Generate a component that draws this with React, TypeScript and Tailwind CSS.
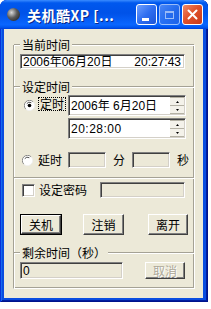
import React from "react";

const etch = "h-[2px] border-t border-t-[#a5a295] bg-white";
const sunken =
  "border border-t-[#808080] border-l-[#808080] border-b-white border-r-white shadow-[inset_1px_1px_0_#404040,inset_-1px_-1px_0_#d4d0c8]";
const raised =
  "border border-t-white border-l-white border-b-[#404040] border-r-[#404040] shadow-[inset_-1px_-1px_0_#808080] bg-[#ece9d8]";
const num = "font-['Liberation_Sans','Noto_Sans_CJK_SC',sans-serif]";

function Legend({ text }: { text: string }) {
  return (
    <div className="flex items-center h-[15px]">
      <div className={`w-[6px] ${etch}`} />
      <span className="px-[2px] text-[12px] leading-[15px]">{text}</span>
      <div className={`flex-1 ${etch}`} />
    </div>
  );
}

function Radio({ checked }: { checked?: boolean }) {
  return (
    <svg width="11" height="11" viewBox="0 0 12 12" className="shrink-0">
      <circle cx="6" cy="6" r="5.5" fill="#fff" />
      <path d="M10 2A5.5 5.5 0 0 0 2 10" fill="none" stroke="#808080" strokeWidth="1" />
      <path d="M3 4A3.8 3.8 0 0 1 8 3" fill="none" stroke="#404040" strokeWidth="1" />
      <path d="M2 10A5.5 5.5 0 0 0 10 2" fill="none" stroke="#f0f0f0" strokeWidth="1" />
      {checked && <circle cx="6" cy="6" r="2" fill="#000" />}
    </svg>
  );
}

function Spin() {
  return (
    <div className="ml-auto mr-[1px] w-[14px] flex flex-col h-full py-[1px]">
      <div className="flex-1 flex items-center justify-center border-t border-b border-[#b5b2a5] bg-[#f4f2ea]">
        <svg width="3" height="2" viewBox="0 0 3 2">
          <path d="M1.5 0L3 2H0z" fill="#000" />
        </svg>
      </div>
      <div className="flex-1 flex items-center justify-center border-b border-[#b5b2a5] bg-[#f4f2ea]">
        <svg width="3" height="2" viewBox="0 0 3 2">
          <path d="M0 0H3L1.5 2z" fill="#000" />
        </svg>
      </div>
    </div>
  );
}

function TitleButton({ kind }: { kind: "min" | "max" | "close" }) {
  const base =
    "w-[21px] h-[21px] rounded-[3px] border border-white flex items-center justify-center";
  if (kind === "close")
    return (
      <div className={`${base} bg-[linear-gradient(135deg,#f08a6a,#e0522b_45%,#c8391a)]`}>
        <svg width="11" height="11" viewBox="0 0 11 11">
          <path d="M1.5 1.5L9.5 9.5M9.5 1.5L1.5 9.5" stroke="#fff" strokeWidth="2" strokeLinecap="round" />
        </svg>
      </div>
    );
  if (kind === "max")
    return (
      <div className={`${base} border-[#c8d8ff] opacity-60 bg-[linear-gradient(135deg,#7aa8ff,#3d7bf0_50%,#2a62de)]`}>
        <div className="w-[9px] h-[8px] border border-white border-t-[2px]" />
      </div>
    );
  return (
    <div className={`${base} bg-[linear-gradient(135deg,#6fa0ff,#2f6ef0_50%,#1c55d8)]`}>
      <div className="w-[7px] h-[3px] bg-white mt-[9px] -ml-[3px]" />
    </div>
  );
}

export default function App() {
  return (
    <div className="w-[211px] h-[309px] bg-white font-['Noto_Sans_CJK_SC',sans-serif] text-black">
      <div className="w-[208px] h-[302px] flex flex-col rounded-t-[7px] bg-[#0a4de0] shadow-[inset_1px_1px_0_#0831d9,inset_-1px_-1px_0_#00138c,inset_2px_2px_0_#166aee,inset_-2px_-2px_0_#001ea0]">
        {/* Title bar */}
        <div className="h-[29px] flex items-center rounded-t-[7px] bg-[linear-gradient(to_bottom,#3b8cff_0%,#0058ee_10%,#0052e8_45%,#0a66ff_85%,#0057f0_94%,#003dd7_100%)]">
          <div className="ml-[7px] w-[13px] h-[13px] rounded-full bg-[radial-gradient(circle_at_35%_35%,#d8d8d8,#5a5a5a_45%,#151515)]" />
          <span className="ml-[7px] text-[14px] font-bold text-white leading-none [text-shadow:1px_1px_0_#0a2a8a] tracking-[0.5px]">
            关机酷XP [...
          </span>
          <div className="ml-auto mr-[5px] flex gap-[2px]">
            <TitleButton kind="min" />
            <TitleButton kind="max" />
            <TitleButton kind="close" />
          </div>
        </div>

        {/* Client */}
        <div className="ml-[4px] w-[199px] h-[269px] bg-[#ece9d8] flex flex-col">
          <div className="mt-[16px] ml-[9px] w-[182px] border-x border-b border-l-[#a5a295] border-r-white border-b-white shadow-[inset_1px_0_0_#fff,inset_-1px_0_0_#a5a295,inset_0_-1px_0_#a5a295] pb-[9px]">
            <div className="-mt-[8px]">
              <Legend text="当前时间" />
            </div>
            <div className={`mt-[2px] ml-[6px] w-[165px] h-[15px] ${sunken} bg-white flex items-center pl-[2px] pr-[3px] text-[12px] leading-none ${num}`}>
              <span>2006年06月20日</span>
              <span className="ml-auto">20:27:43</span>
            </div>

            <div className="mt-[10px]">
              <Legend text="设定时间" />
            </div>
            <div className="mt-[1px] flex">
              <div className="w-[54px] pl-[10px] pt-[2px] flex items-start">
                <div className="mt-[3px]">
                  <Radio checked />
                </div>
                <span className="ml-[3px] border border-dotted border-black px-[1px] text-[12px] leading-[12px]">
                  定时
                </span>
              </div>
              <div className="w-[118px]">
                <div className={`h-[21px] ${sunken} bg-white flex items-center pl-[2px] text-[12px] ${num}`}>
                  <span>2006年 6月20日</span>
                  <Spin />
                </div>
                <div className={`mt-[2px] h-[21px] ${sunken} bg-white flex items-center pl-[2px] text-[12px] ${num}`}>
                  <span className="tracking-[0.5px]">20:28:00</span>
                  <Spin />
                </div>
              </div>
            </div>

            <div className="mt-[13px] flex items-center h-[16px] text-[12px]">
              <div className="w-[54px] pl-[8px] flex items-center">
                <Radio />
                <span className="ml-[5px]">延时</span>
              </div>
              <div className={`w-[38px] h-[16px] ${sunken} bg-[#ece9d8]`} />
              <span className="ml-[7px]">分</span>
              <div className={`ml-[7px] w-[38px] h-[16px] ${sunken} bg-[#ece9d8]`} />
              <span className="ml-[7px]">秒</span>
            </div>

            <div className={`mt-[9px] ${etch}`} />

            <div className="mt-[3px] flex items-center h-[16px] text-[12px]">
              <div className={`ml-[8px] w-[13px] h-[13px] ${sunken} bg-white`} />
              <span className="ml-[4px]">设定密码</span>
              <div className={`ml-auto mr-[9px] w-[85px] h-[16px] ${sunken} bg-[#ece9d8]`} />
            </div>

            <div className="mt-[16px] flex h-[21px] text-[12px]">
              <div className="ml-[6px] w-[42px] border border-black">
                <div className={`h-full ${raised} flex items-center justify-center`}>关机</div>
              </div>
              <div className={`ml-[21px] w-[41px] ${raised} flex items-center justify-center`}>注销</div>
              <div className={`ml-[24px] w-[40px] ${raised} flex items-center justify-center`}>离开</div>
            </div>

            <div className="mt-[10px]">
              <Legend text="剩余时间（秒）" />
            </div>
            <div className="mt-[2px] flex h-[17px] text-[12px]">
              <div className={`ml-[6px] w-[103px] ${sunken} bg-[#ece9d8] flex items-center pl-[2px] text-[12px] ${num}`}>
                0
              </div>
              <div className={`ml-[22px] w-[40px] ${raised} flex items-center justify-center text-[#aca899] [text-shadow:1px_1px_0_#fff]`}>
                取消
              </div>
            </div>
          </div>
        </div>
      </div>
    </div>
  );
}
